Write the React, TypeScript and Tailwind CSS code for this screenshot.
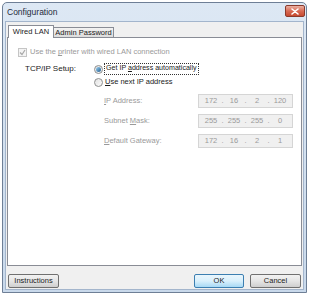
import React from "react";

const font = "font-['Liberation_Sans',Arial,sans-serif]";

function Radio({ checked }: { checked?: boolean }) {
  return (
    <span className="flex h-[9px] w-[9px] shrink-0 items-center justify-center rounded-full border border-[#8e8f8f] bg-gradient-to-br from-[#e2e2e2] to-[#fbfbfb]">
      {checked && (
        <span className="h-[5px] w-[5px] rounded-full bg-gradient-to-br from-[#9fd3f4] to-[#1d5d8e]" />
      )}
    </span>
  );
}

function IpField({ parts }: { parts: string[] }) {
  return (
    <div className="flex h-[14px] w-[95px] items-center border border-[#d5d5d5] bg-[#f0f0f0] px-[2px] text-[#9a9a9a]">
      {parts.map((p, i) => (
        <React.Fragment key={i}>
          <span className="flex-1 text-center">{p}</span>
          {i < parts.length - 1 && <span className="w-[3px] text-center">.</span>}
        </React.Fragment>
      ))}
    </div>
  );
}

function Button({ children, primary }: { children: React.ReactNode; primary?: boolean }) {
  return (
    <button
      className={
        primary
          ? "flex h-[14px] w-[50px] items-center justify-center rounded-[2px] border border-[#3c7fb1] bg-gradient-to-b from-[#eaf6fd] via-[#d9f0fc] to-[#a7d9f5] text-[#1b1b1b]"
          : "flex h-[14px] w-[51px] items-center justify-center rounded-[2px] border border-[#707070] bg-gradient-to-b from-[#f2f2f2] via-[#e5e5e5] to-[#cfcfcf] text-[#1b1b1b]"
      }
    >
      {children}
    </button>
  );
}

export default function App() {
  return (
    <div className={`h-[295px] w-[309px] bg-white pl-[2px] pt-[2px] ${font} text-[7.5px] leading-none text-[#1b1b1b]`}>
      <div className="flex h-[291px] w-[305px] flex-col rounded-t-[5px] border border-[#6e7f96] bg-gradient-to-b from-[#dde8f4] to-[#c9d9eb]">
        {/* title bar */}
        <div className="flex h-[18px] items-center justify-between pl-[4px] pr-[1px]">
          <span className="text-[8.5px] text-[#1e2a3a]">Configuration</span>
          <div className="mb-[2px] flex h-[12px] w-[20px] items-center justify-center rounded-[2px] border border-[#8a3a2c] bg-gradient-to-b from-[#eab0a2] via-[#d86a54] to-[#c64a30]">
            <svg width="8" height="7" viewBox="0 0 8 7">
              <path d="M1 1 L7 6 M7 1 L1 6" stroke="#fff" strokeWidth="1.6" strokeLinecap="round" />
            </svg>
          </div>
        </div>

        {/* client */}
        <div className="mx-[2px] mb-[2px] flex flex-1 flex-col border border-[#a3b5cc] bg-[#f0f0f0]">
          <div className="relative z-10 flex h-[15px] items-end pl-[2px]">
            <div className="-mb-px flex h-[13px] w-[46px] items-center justify-center border border-b-0 border-[#898c95] bg-white">
              Wired LAN
            </div>
            <div className="-ml-px flex h-[10px] w-[61px] items-center justify-center border border-b-0 border-[#898c95] bg-gradient-to-b from-[#f3f3f3] to-[#dcdcdc]">
              Admin Password
            </div>
          </div>

          <div className="ml-[1px] flex h-[229px] w-[295px] flex-col border border-[#898c95] bg-white pt-[9px]">
            <div className="flex h-[10px] items-center pl-[10px] text-[#9a9a9a]">
              <span className="flex h-[9px] w-[9px] items-center justify-center border border-[#c5c5c5] bg-[#f4f4f4]">
                <svg width="7" height="7" viewBox="0 0 7 7">
                  <path d="M1 3.5 L3 5.5 L6 1" stroke="#a8a8a8" strokeWidth="1.2" fill="none" />
                </svg>
              </span>
              <span className="ml-[3px]">
                Use the <span className="underline">p</span>rinter with wired LAN connection
              </span>
            </div>

            <div className="mt-[6px] flex pl-[17px]">
              <div className="flex h-[12px] w-[69px] items-center text-[8px]">TCP/IP Setup:</div>
              <div className="flex flex-col gap-[1px]">
                <div className="flex h-[12px] items-center">
                  <Radio checked />
                  <span className="ml-[1px] border border-dotted border-[#333] px-px py-px text-[7.1px]">
                    Get IP <span className="underline">a</span>ddress automatically
                  </span>
                </div>
                <div className="flex h-[12px] items-center">
                  <Radio />
                  <span className="ml-[2px]">
                    <span className="underline">U</span>se next IP address
                  </span>
                </div>
              </div>
            </div>

            <div className="mt-[6px] flex flex-col gap-[6px] pl-[96px] text-[#9a9a9a]">
              <div className="flex items-center">
                <span className="w-[94px]">
                  <span className="underline">I</span>P Address:
                </span>
                <IpField parts={["172", "16", "2", "120"]} />
              </div>
              <div className="flex items-center">
                <span className="w-[94px]">
                  Subnet <span className="underline">M</span>ask:
                </span>
                <IpField parts={["255", "255", "255", "0"]} />
              </div>
              <div className="flex items-center">
                <span className="w-[94px]">
                  <span className="underline">D</span>efault Gateway:
                </span>
                <IpField parts={["172", "16", "2", "1"]} />
              </div>
            </div>
          </div>

          <div className="mt-[8px] flex items-center px-[2px]">
            <Button>Instructions</Button>
            <div className="flex-1" />
            <Button primary>OK</Button>
            <div className="w-[6px]" />
            <Button>Cancel</Button>
          </div>
        </div>
      </div>
    </div>
  );
}
